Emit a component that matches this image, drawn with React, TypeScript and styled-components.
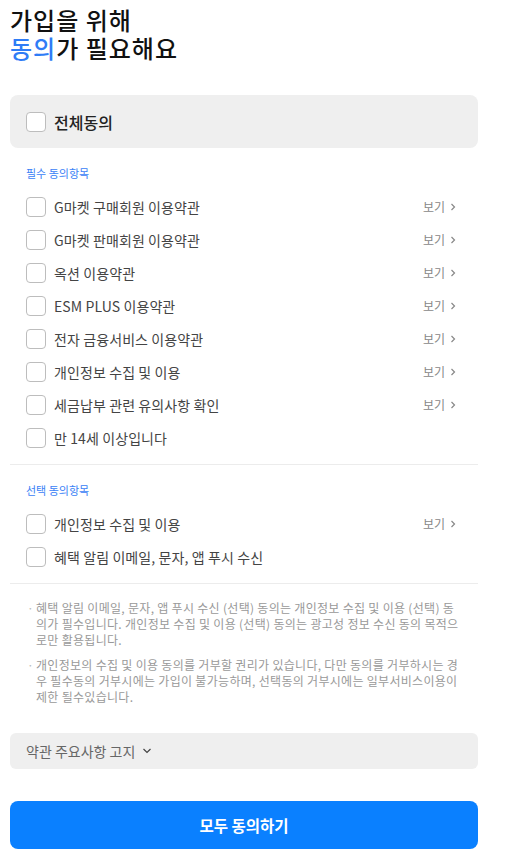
import { createGlobalStyle } from "styled-components";
import styled from "styled-components";

const GlobalStyle = createGlobalStyle`
  body {
    margin: 0;
    background: #fff;
    font-family: "Noto Sans CJK KR", "Noto Sans", sans-serif;
    color: #222;
  }
`;

const Page = styled.div`
  width: 468px;
  padding: 6px 0 0 10px;
`;

const Title = styled.h1`
  margin: 0;
  font-size: 24px;
  line-height: 28px;
  font-weight: 500;
  letter-spacing: 1px;
  color: #111;
`;

const Accent = styled.span`
  color: #2f7cf6;
`;

const AllBox = styled.label`
  display: flex;
  align-items: center;
  gap: 8px;
  height: 53px;
  margin-top: 33px;
  padding-left: 16px;
  background: #efefef;
  border-radius: 8px;
  font-size: 16px;
  font-weight: 500;
  color: #222;
`;

const Box = styled.span`
  flex: none;
  width: 20px;
  height: 20px;
  box-sizing: border-box;
  border: 1px solid #bdbdbd;
  border-radius: 4px;
  background: #fff;
`;

const Section = styled.section`
  padding-top: 17px;
  padding-bottom: 10px;
  border-bottom: 1px solid #ececec;
`;

const SectionLabel = styled.div`
  padding-left: 16px;
  margin-bottom: 9px;
  font-size: 11px;
  line-height: 16px;
  color: #3b82f6;
`;

const Row = styled.div`
  display: flex;
  align-items: center;
  gap: 8px;
  height: 33px;
  padding: 0 21px 0 16px;
`;

const RowText = styled.span`
  flex: 1;
  font-size: 14px;
  letter-spacing: 0.1px;
  color: #444;
`;

const ViewLink = styled.span`
  display: flex;
  align-items: center;
  gap: 4px;
  font-size: 12px;
  color: #888;
`;

const Notes = styled.ul`
  list-style: none;
  margin: 0;
  padding: 16px 18px 0 17px;
  display: flex;
  flex-direction: column;
  gap: 9px;
`;

const Note = styled.li`
  position: relative;
  padding-left: 9px;
  font-size: 12px;
  line-height: 16px;
  letter-spacing: 0.3px;
  color: #999;

  &::before {
    content: "·";
    position: absolute;
    left: 0;
    top: 0;
    color: #bbb;
  }
`;

const NoticeBar = styled.div`
  display: flex;
  align-items: center;
  gap: 7px;
  height: 36px;
  margin-top: 28px;
  padding-left: 16px;
  background: #efefef;
  border-radius: 6px;
  font-size: 14px;
  color: #666;
`;

const SubmitButton = styled.button`
  display: block;
  width: 100%;
  height: 48px;
  margin-top: 32px;
  border: 0;
  border-radius: 8px;
  background: #0a80ff;
  color: #fff;
  font-family: inherit;
  font-size: 15.5px;
  font-weight: 700;
`;

const Chevron = ({ dir }: { dir: "right" | "down" }) =>
  dir === "right" ? (
    <svg width="8" height="8" viewBox="0 0 8 8" fill="none" stroke="#888" strokeWidth="1.2">
      <path d="M2.5 1 L5.5 4 L2.5 7" />
    </svg>
  ) : (
    <svg width="10" height="10" viewBox="0 0 10 10" fill="none" stroke="#444" strokeWidth="1.2">
      <path d="M1.5 3 L5 6.5 L8.5 3" />
    </svg>
  );

const required = [
  { label: "G마켓 구매회원 이용약관", view: true },
  { label: "G마켓 판매회원 이용약관", view: true },
  { label: "옥션 이용약관", view: true },
  { label: "ESM PLUS 이용약관", view: true },
  { label: "전자 금융서비스 이용약관", view: true },
  { label: "개인정보 수집 및 이용", view: true },
  { label: "세금납부 관련 유의사항 확인", view: true },
  { label: "만 14세 이상입니다", view: false },
];

const optional = [
  { label: "개인정보 수집 및 이용", view: true },
  { label: "혜택 알림 이메일, 문자, 앱 푸시 수신", view: false },
];

function TermRow({ label, view }: { label: string; view: boolean }) {
  return (
    <Row>
      <Box />
      <RowText>{label}</RowText>
      {view && (
        <ViewLink>
          보기 <Chevron dir="right" />
        </ViewLink>
      )}
    </Row>
  );
}

export default function App() {
  return (
    <>
      <GlobalStyle />
      <Page>
        <Title>
          가입을 위해
          <br />
          <Accent>동의</Accent>가 필요해요
        </Title>
        <AllBox>
          <Box />
          전체동의
        </AllBox>
        <Section>
          <SectionLabel>필수 동의항목</SectionLabel>
          {required.map((t) => (
            <TermRow key={t.label} {...t} />
          ))}
        </Section>
        <Section>
          <SectionLabel>선택 동의항목</SectionLabel>
          {optional.map((t) => (
            <TermRow key={t.label} {...t} />
          ))}
        </Section>
        <Notes>
          <Note>
            혜택 알림 이메일, 문자, 앱 푸시 수신 (선택) 동의는 개인정보 수집 및
            이용 (선택) 동의가 필수입니다. 개인정보 수집 및 이용 (선택) 동의는
            광고성 정보 수신 동의 목적으로만 활용됩니다.
          </Note>
          <Note>
            개인정보의 수집 및 이용 동의를 거부할 권리가 있습니다, 다만 동의를
            거부하시는 경우 필수동의 거부시에는 가입이 불가능하며, 선택동의
            거부시에는 일부서비스이용이 제한 될수있습니다.
          </Note>
        </Notes>
        <NoticeBar>
          약관 주요사항 고지 <Chevron dir="down" />
        </NoticeBar>
        <SubmitButton>모두 동의하기</SubmitButton>
      </Page>
    </>
  );
}
